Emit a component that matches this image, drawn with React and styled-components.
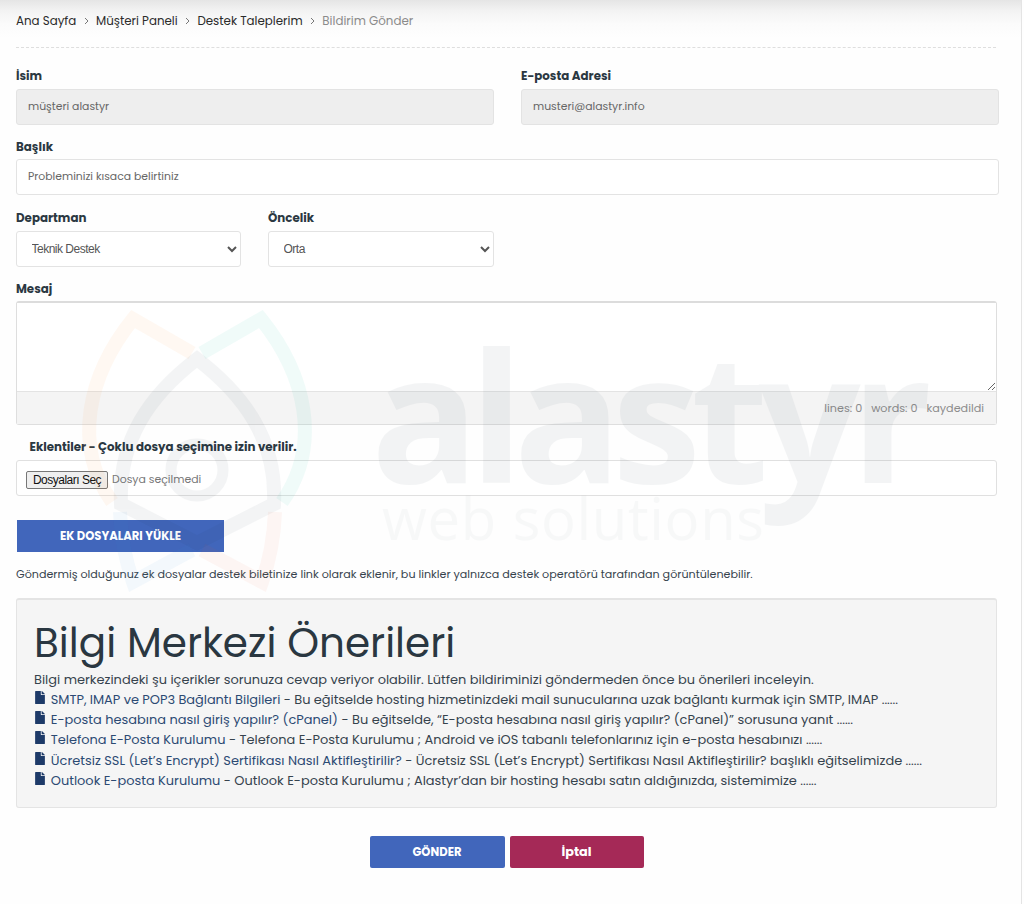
import { FaFile } from "react-icons/fa";
import styled, { createGlobalStyle } from "styled-components";

const GlobalStyle = createGlobalStyle`
  * {
    box-sizing: border-box;
  }
  body {
    margin: 0;
    background: #fefefe;
    color: #36434d;
    font-family: Poppins, Inter, sans-serif;
    font-size: 11.85px;
  }
`;
const Page = styled.div`
  position: relative;
  width: 1022px;
  height: 904px;
  padding: 0 26px 0 16px;
  border-right: 1px solid #e4e4e4;
  background: linear-gradient(#e5e5e5, #f3f3f3 11px, #fbfbfb 24px, #fefefe 38px);
  overflow: hidden;
`;
const Breadcrumb = styled.nav`
  display: flex;
  align-items: center;
  width: 980px;
  height: 48px;
  padding-bottom: 6px;
  border-bottom: 1px dashed #dedede;
  line-height: 16px;
`;
const Crumb = styled.a`
  color: ${(props) => (props.$active ? "#8b8b8b" : "#2b2b2b")};
  white-space: nowrap;
`;
const Separator = styled.svg`
  width: 5px;
  height: 8px;
  margin: 0 7px 0 7.7px;
  fill: none;
  stroke: #777;
  stroke-width: 1;
`;
const Form = styled.form`
  display: flex;
  flex-direction: column;
  padding-top: 19px;
`;
const Row = styled.div`
  display: flex;
  gap: 27px;
  width: 983px;
  margin-bottom: 14px;
`;
const Field = styled.div`
  display: flex;
  flex-direction: column;
  width: ${(props) => props.$width}px;
`;
const Label = styled.label`
  height: ${(props) => (props.$tight ? 20 : 22)}px;
  padding-left: ${(props) => props.$indent || 0}px;
  color: #2b3842;
  font-weight: 700;
  line-height: ${(props) => (props.$tight ? 16 : 18)}px;
`;
const Input = styled.input`
  height: 36px;
  padding: 0 11px ${(props) => (props.disabled ? 1 : 0)}px;
  border: 1px solid #e3e3e3;
  border-radius: 3px;
  background: ${(props) => (props.disabled ? "#eeeeee" : "#ffffff")};
  color: #666;
  font: 10.85px Poppins, Inter, sans-serif;
  &::placeholder {
    color: #666;
  }
`;
const Select = styled.select`
  height: 36px;
  padding: 0 0 1px 10.5px;
  border: 1px solid #e3e3e3;
  border-radius: 3px;
  background: #fff;
  color: #555;
  font: 12px "Liberation Sans", Arial, sans-serif;
  letter-spacing: -0.5px;
`;
const Editor = styled.div`
  width: 981px;
  height: 124px;
  border: 1px solid #dedede;
  border-top: 2px solid #dcdcdc;
  border-radius: 3px;
`;
const Message = styled.textarea`
  display: block;
  width: 100%;
  height: 88px;
  border: 0;
  background: #fff;
  resize: vertical;
`;
const EditorStatus = styled.div`
  display: flex;
  justify-content: flex-end;
  gap: 9px;
  height: 33px;
  padding-right: 12px;
  border-top: 1px solid #e3e3e3;
  background: #f4f4f4;
  color: #8c8c8c;
  font-size: 11.2px;
  line-height: 33px;
`;
const Attachments = styled.div`
  display: flex;
  flex-direction: column;
  width: 981px;
  margin-top: 13px;
`;
const FileBox = styled.div`
  display: flex;
  align-items: center;
  gap: 4px;
  height: 36px;
  padding: 3px 9px 0;
  border: 1px solid #e0e0e0;
  border-radius: 3px;
  background: #fff;
  color: #777;
  font-size: 10.9px;
  line-height: 18px;
`;
const FileButton = styled.button`
  width: 82px;
  height: 18px;
  padding: 0;
  border: 1px solid #777;
  border-radius: 2px;
  background: #efefef;
  color: #111;
  font: 12px "Liberation Sans", Arial, sans-serif;
  letter-spacing: -0.5px;
  white-space: nowrap;
`;
const Button = styled.button`
  width: ${(props) => props.$width}px;
  height: 32px;
  padding: 0;
  border: 0;
  border-radius: ${(props) => (props.$square ? 0 : 2)}px;
  background: ${(props) => (props.$danger ? "#a52957" : "#4166bb")};
  color: #fff;
  font: 700 ${(props) => props.$size || 11.6}px Poppins, Inter, sans-serif;
`;
const UploadRow = styled.div`
  height: 55px;
  padding: 24px 0 0 1px;
`;
const Note = styled.p`
  margin: 15px 0 0;
  font-size: 11.13px;
  line-height: 16px;
  white-space: nowrap;
`;
const Suggestions = styled.section`
  width: 981px;
  height: 210px;
  margin-top: 16px;
  padding: 17px;
  border: 1px solid #e4e4e4;
  border-top: 2px solid #e4e4e4;
  border-radius: 3px;
  background: #f5f5f5;
  font-size: 12.95px;
  line-height: 20.2px;
  white-space: nowrap;
`;
const Title = styled.h1`
  margin: 0;
  height: 52.5px;
  color: #2a3741;
  font-size: 40.5px;
  font-weight: 400;
  line-height: 51px;
`;
const Line = styled.div`
  height: 20.25px;
  letter-spacing: ${(props) => props.$spacing || 0}px;
`;
const FileIcon = styled(FaFile)`
  width: 10px;
  height: 13px;
  margin-right: 5.8px;
  margin-left: 1px;
  color: #1d3a68;
`;
const ArticleLink = styled.a`
  color: #2c4a73;
`;
const Actions = styled.div`
  display: flex;
  gap: 5px;
  margin: 28px 0 0 353.5px;
`;
const Watermark = styled.svg`
  position: absolute;
  top: 0;
  left: 0;
  pointer-events: none;
`;

const crumbs = ["Ana Sayfa", "Müşteri Paneli", "Destek Taleplerim"];

const articles = [
  {
    title: "SMTP, IMAP ve POP3 Bağlantı Bilgileri",
    text: "Bu eğitselde hosting hizmetinizdeki mail sunucularına uzak bağlantı kurmak için SMTP, IMAP ......",
    spacing: -0.03,
  },
  {
    title: "E-posta hesabına nasıl giriş yapılır? (cPanel)",
    text: "Bu eğitselde, “E-posta hesabına nasıl giriş yapılır? (cPanel)” sorusuna yanıt ......",
  },
  {
    title: "Telefona E-Posta Kurulumu",
    text: "Telefona E-Posta Kurulumu ; Android ve iOS tabanlı telefonlarınız için e-posta hesabınızı ......",
  },
  {
    title: "Ücretsiz SSL (Let’s Encrypt) Sertifikası Nasıl Aktifleştirilir?",
    text: "Ücretsiz SSL (Let’s Encrypt) Sertifikası Nasıl Aktifleştirilir? başlıklı eğitselimizde ......",
  },
  {
    title: "Outlook E-posta Kurulumu",
    text: "Outlook E-posta Kurulumu ; Alastyr’dan bir hosting hesabı satın aldığınızda, sistemimize ......",
    spacing: -0.01,
  },
];

const AlastyrWatermark = () => (
  <Watermark width="1000" height="640" viewBox="0 0 1000 640" aria-hidden="true">
    <g fill="none" strokeWidth="14">
      <path d="M192 353L133 319C88 375 72 445 112 502" stroke="#ff9a3c" opacity=".065" />
      <path d="M202 353L261 319C306 375 322 445 282 502" stroke="#2fc4a8" opacity=".07" />
      <path d="M120 512C121 538 126 562 133 582L192 550" stroke="#3c8ae0" opacity=".055" />
      <path d="M202 550L262 582C269 562 274 538 275 512" stroke="#f0623c" opacity=".055" />
      <g stroke="#2a4052" opacity=".05">
        <path d="M197 359C150 395 118 440 121 504L197 543L274 504C277 440 244 395 197 359Z" />
        <circle cx="197" cy="470" r="26" strokeWidth="11" />
      </g>
    </g>
    <g fill="#2a4052" fontFamily="Open Sans, sans-serif">
      <text x="371" y="483" fontSize="179" fontWeight="700" textLength="561" opacity=".052">
        alastyr
      </text>
      <text x="382" y="540" fontSize="58" textLength="382" opacity=".028">
        web solutions
      </text>
    </g>
  </Watermark>
);

const App = () => {
  return (
    <Page>
      <GlobalStyle />
      <Breadcrumb>
        {crumbs.map((item) => (
          <div key={item}>
            <Crumb>{item}</Crumb>
            <Separator viewBox="0 0 5 8">
              <path d="M1 1l3 3-3 3" />
            </Separator>
          </div>
        ))}
        <Crumb $active>Bildirim Gönder</Crumb>
      </Breadcrumb>
      <Form>
        <Row>
          <Field $width={478}>
            <Label>İsim</Label>
            <Input disabled defaultValue="müşteri alastyr" />
          </Field>
          <Field $width={478}>
            <Label>E-posta Adresi</Label>
            <Input disabled defaultValue="musteri@alastyr.info" />
          </Field>
        </Row>
        <Row>
          <Field $width={983}>
            <Label $tight>Başlık</Label>
            <Input placeholder="Probleminizi kısaca belirtiniz" />
          </Field>
        </Row>
        <Row>
          <Field $width={225}>
            <Label>Departman</Label>
            <Select>
              <option>Teknik Destek</option>
            </Select>
          </Field>
          <Field $width={226}>
            <Label>Öncelik</Label>
            <Select>
              <option>Orta</option>
            </Select>
          </Field>
        </Row>
        <Label $tight>Mesaj</Label>
        <Editor>
          <Message />
          <EditorStatus>
            <span>lines: 0</span>
            <span>words: 0</span>
            <span>kaydedildi</span>
          </EditorStatus>
        </Editor>
        <Attachments>
          <Label $indent={13.5}>
            Eklentiler - Çoklu dosya seçimine izin verilir.
          </Label>
          <FileBox>
            <FileButton type="button">Dosyaları Seç</FileButton>
            <span>Dosya seçilmedi</span>
          </FileBox>
        </Attachments>
        <UploadRow>
          <Button type="button" $width={207} $square>EK DOSYALARI YÜKLE</Button>
        </UploadRow>
        <Note>
          Göndermiş olduğunuz ek dosyalar destek biletinize link olarak eklenir, bu linkler yalnızca destek operatörü tarafından görüntülenebilir.
        </Note>
        <Suggestions>
          <Title>Bilgi Merkezi Önerileri</Title>
          <Line>
            Bilgi merkezindeki şu içerikler sorunuza cevap veriyor olabilir. Lütfen bildiriminizi göndermeden önce bu önerileri inceleyin.
          </Line>
          {articles.map((item) => (
            <Line key={item.title} $spacing={item.spacing}>
              <FileIcon />
              <ArticleLink>{item.title}</ArticleLink> - {item.text}
            </Line>
          ))}
        </Suggestions>
        <Actions>
          <Button type="button" $width={135}>GÖNDER</Button>
          <Button type="button" $width={134} $size={12.8} $danger>İptal</Button>
        </Actions>
      </Form>
      <AlastyrWatermark />
    </Page>
  );
};
export default App;
